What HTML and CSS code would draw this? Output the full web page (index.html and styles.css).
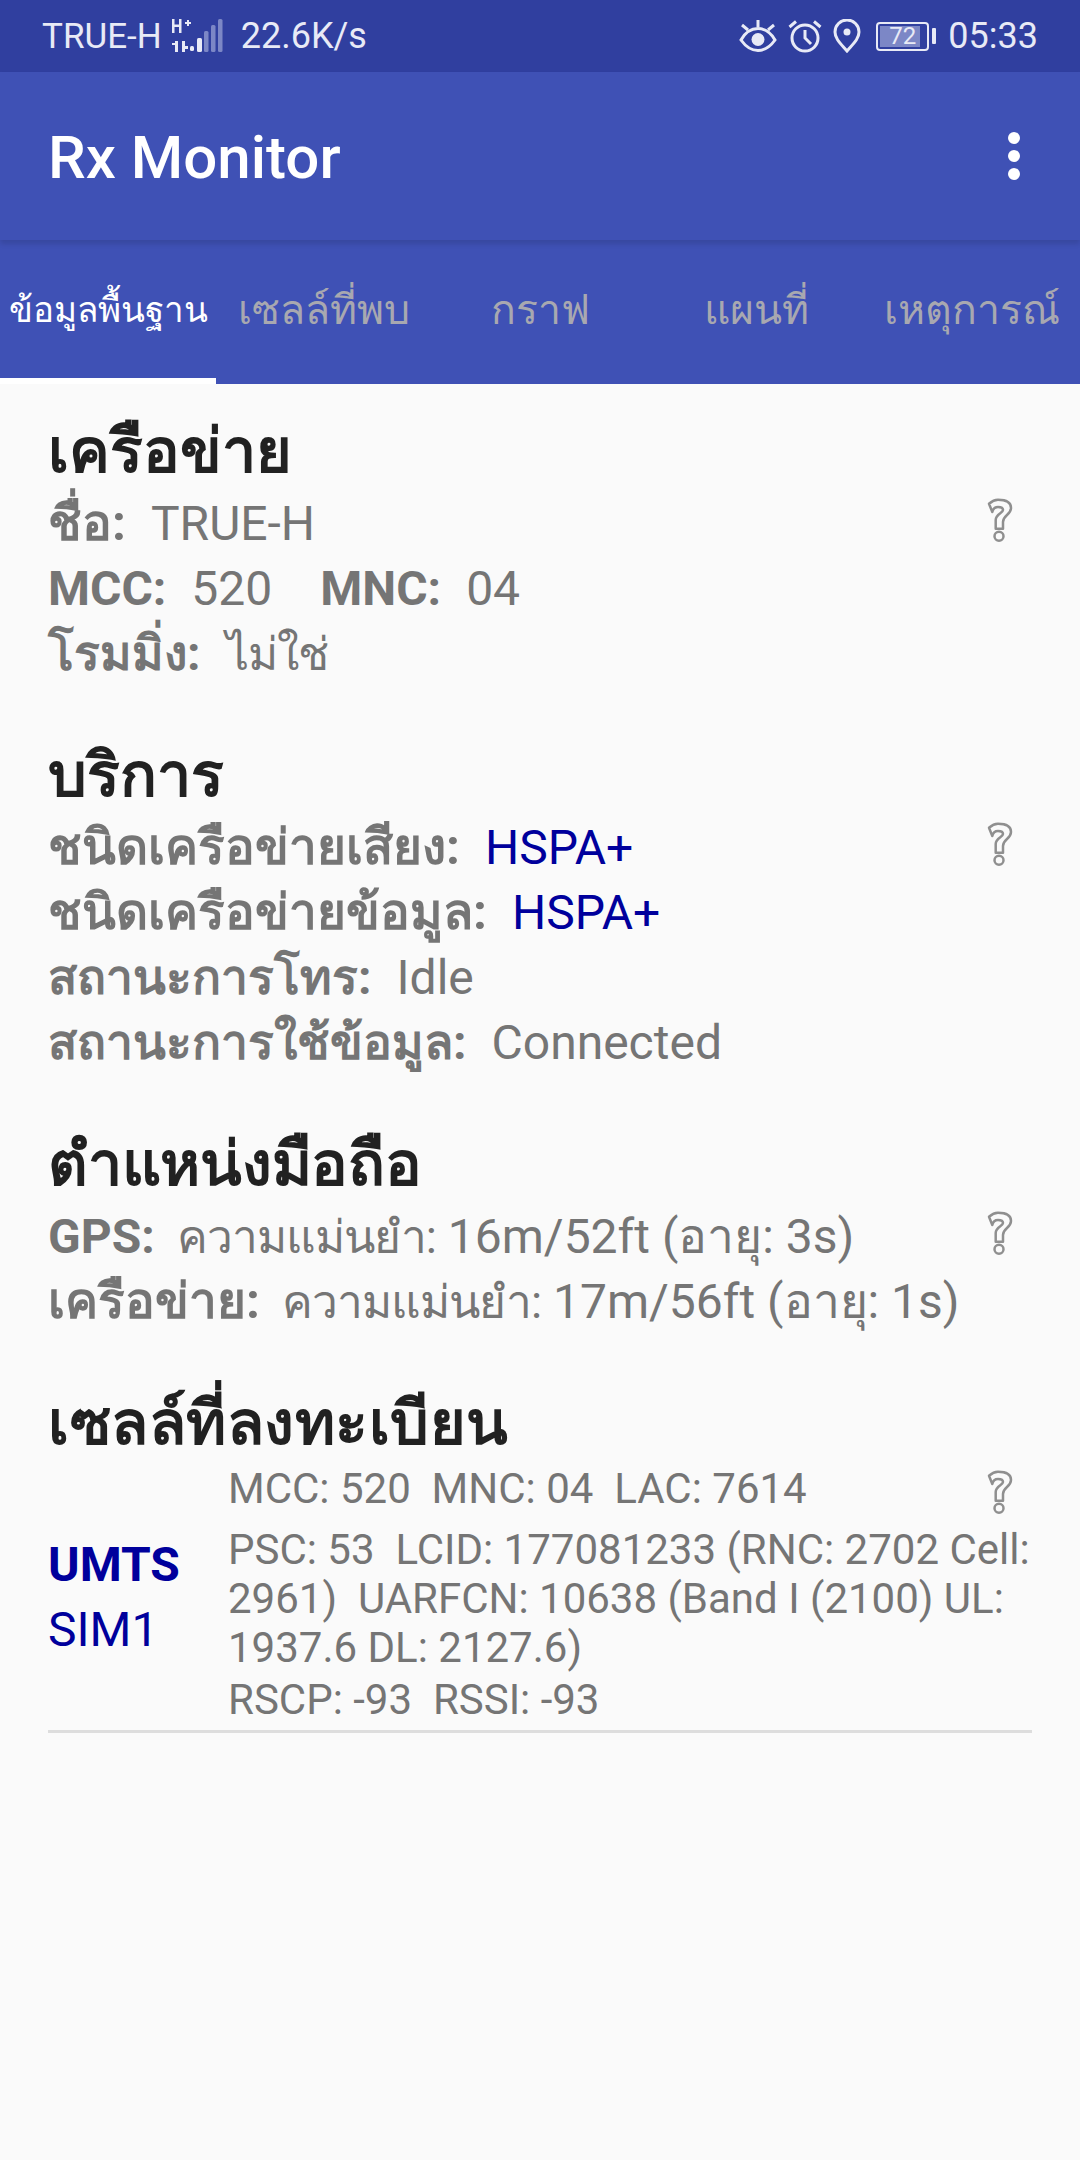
FILE: index.html
```html
<!DOCTYPE html>
<html lang="th">
<head>
<meta charset="utf-8">
<title>Rx Monitor</title>
<link rel="stylesheet" href="styles.css">
</head>
<body>
<div class="status">
  <div class="status-left">
    <span class="carrier">TRUE-H</span>
    <svg class="signal" width="56" height="36" viewBox="0 0 56 36">
      <g fill="#e8eaf6">
        <rect x="1" y="1" width="2.5" height="14"/><rect x="8" y="1" width="2.5" height="14"/><rect x="3" y="6.5" width="6" height="2.5"/>
        <rect x="14" y="4" width="6" height="2"/><rect x="16" y="2" width="2" height="6"/>
        <rect x="4" y="23" width="3" height="11"/><rect x="1" y="25" width="4" height="2"/>
        <rect x="11" y="23" width="3" height="11"/><rect x="11" y="28" width="6" height="3"/>
        <rect x="19" y="28" width="4" height="5" rx="1.5"/>
        <rect x="26" y="20" width="5" height="14" rx="1.5"/>
      </g>
      <g fill="#7c87c6">
        <rect x="33" y="13" width="4.5" height="21" rx="1.5"/>
        <rect x="40" y="7" width="4.5" height="27" rx="1.5"/>
        <rect x="47" y="1" width="4.5" height="33" rx="1.5"/>
      </g>
    </svg>
    <span class="speed">22.6K/s</span>
  </div>
  <div class="status-right">
    <svg class="st-icon" width="38" height="34" viewBox="0 0 38 34">
      <path d="M2 21C7 12 13 9.500 19 9.500S31 12 36 21C31 28 25 31.500 19 31.500S7 28 2 21Z" fill="none" stroke="#e8eaf6" stroke-width="3"/>
      <circle cx="19" cy="20.500" r="6.500" fill="#e8eaf6"/>
      <path d="M19 1V8M3 6L9 11M35 6L29 11" stroke="#e8eaf6" stroke-width="3" fill="none"/>
    </svg>
    <svg class="st-icon" width="34" height="34" viewBox="0 0 34 34">
      <circle cx="17" cy="19" r="13" fill="none" stroke="#e8eaf6" stroke-width="3"/>
      <path d="M17 11V19L23 25M1.500 8L8 2.500M32.500 8L26 2.500" fill="none" stroke="#e8eaf6" stroke-width="3"/>
    </svg>
    <svg class="st-icon pin" width="28" height="34" viewBox="0 0 28 34">
      <path d="M14 32C8 25 2 20 2 13A12 12 0 0 1 26 13C26 20 20 25 14 32Z" fill="none" stroke="#e8eaf6" stroke-width="3"/>
      <circle cx="14" cy="13" r="3.500" fill="#e8eaf6"/>
    </svg>
    <div class="battery">
      <div class="battery-box"><span class="battery-fill"></span><span class="battery-num">72</span></div>
      <span class="battery-tip"></span>
    </div>
    <span class="clock">05:33</span>
  </div>
</div>

<header class="appbar">
  <h1 class="app-title">Rx Monitor</h1>
  <div class="menu"><i></i><i></i><i></i></div>
</header>

<nav class="tabs">
  <div class="tab active small">ข้อมูลพื้นฐาน</div>
  <div class="tab">เซลล์ที่พบ</div>
  <div class="tab">กราฟ</div>
  <div class="tab">แผนที่</div>
  <div class="tab">เหตุการณ์</div>
</nav>

<main class="content">
  <section class="section">
    <h2 class="heading">เครือข่าย</h2>
    <div class="rows">
      <svg class="help" width="28" height="46" viewBox="0 0 28 46"><use href="#q"/></svg>
      <div class="row"><b class="tb">ชื่อ:</b><span>TRUE-H</span></div>
      <div class="row"><b>MCC:</b><span>520</span><b class="next">MNC:</b><span>04</span></div>
      <div class="row"><b class="tb2">โรมมิ่ง:</b><span class="th">ไม่ใช่</span></div>
    </div>
  </section>
  <section class="section">
    <h2 class="heading">บริการ</h2>
    <div class="rows">
      <svg class="help" width="28" height="46" viewBox="0 0 28 46"><use href="#q"/></svg>
      <div class="row"><b class="tb">ชนิดเครือข่ายเสียง:</b><span class="blue">HSPA+</span></div>
      <div class="row"><b class="tb">ชนิดเครือข่ายข้อมูล:</b><span class="blue">HSPA+</span></div>
      <div class="row"><b class="tb2">สถานะการโทร:</b><span>Idle</span></div>
      <div class="row"><b class="tb2">สถานะการใช้ข้อมูล:</b><span>Connected</span></div>
    </div>
  </section>
  <section class="section">
    <h2 class="heading tight">ตำแหน่งมือถือ</h2>
    <div class="rows">
      <svg class="help" width="28" height="46" viewBox="0 0 28 46"><use href="#q"/></svg>
      <div class="row"><b>GPS:</b><span class="th lead">ความแม่นยำ:</span> <span>16m/52ft (อายุ: 3s)</span></div>
      <div class="row"><b class="tb">เครือข่าย:</b><span class="th lead">ความแม่นยำ:</span> <span>17m/56ft (อายุ: 1s)</span></div>
    </div>
  </section>
  <section class="section">
    <h2 class="heading loose">เซลล์ที่ลงทะเบียน</h2>
    <div class="cell">
      <div class="cell-type"><b>UMTS</b><span>SIM1</span></div>
      <div class="cell-info">
        <svg class="help" width="28" height="46" viewBox="0 0 28 46"><use href="#q"/></svg>
        <p class="first">MCC: 520&nbsp; MNC: 04&nbsp; LAC: 7614</p>
        <p>PSC: 53&nbsp; LCID: 177081233 (RNC: 2702 Cell: 2961)&nbsp; UARFCN: 10638 (Band I (2100) UL: 1937.6 DL: 2127.6)</p>
        <p>RSCP: -93&nbsp; RSSI: -93</p>
      </div>
    </div>
    <div class="divider"></div>
  </section>
</main>

<svg class="defs" width="0" height="0">
  <defs>
    <g id="q" fill="#fafafa" stroke="#8f8f8f" stroke-width="2.500" stroke-linejoin="round">
      <path d="M3 5.700C6 3 9 1.700 12 1.700C18 1.700 25 3 25 10C25 17 17 17 17 24V30.700H9.700V22C9.700 16 17 15 17 12C17 10 15 9 12 9C9 9 7 11 6.300 14Z"/>
      <circle cx="13" cy="38.300" r="4.500"/>
    </g>
  </defs>
</svg>
</body>
</html>
```
FILE: styles.css
```css
* { box-sizing: border-box; }
html, body { margin: 0; padding: 0; }
body {
  width: 1080px;
  height: 2160px;
  background: #fafafa;
  font-family: Roboto, "Noto Sans", "Liberation Sans", sans-serif;
  overflow: hidden;
}
.status {
  height: 72px;
  background: #303f9f;
  color: #e8eaf6;
  display: flex;
  justify-content: space-between;
  align-items: center;
  padding: 0 42px 0 42px;
  font-size: 36px;
}
.status-left, .status-right { display: flex; align-items: center; }
.carrier { font-size: 35px; }
.signal { margin-left: 9px; }
.speed { margin-left: 14px; }
.st-icon { margin-right: 11px; }
.pin { margin-right: 15px; }
.battery { display: flex; align-items: center; margin-right: 12px; }
.battery-box {
  position: relative;
  width: 53px;
  height: 29px;
  border: 2px solid #e8eaf6;
  border-radius: 4px;
  font-size: 24px;
  text-align: center;
  line-height: 25px;
  overflow: hidden;
}
.battery-fill { position: absolute; left: 2px; top: 2px; bottom: 2px; width: 80%; background: #7c87c6; }
.battery-num { position: relative; }
.battery-tip { width: 4px; height: 16px; margin-left: 3px; background: #e8eaf6; border-radius: 1px; }
.appbar {
  height: 168px;
  background: #3f51b5;
  display: flex;
  align-items: center;
  justify-content: space-between;
  padding: 0 60px 0 48px;
  box-shadow: 0 4px 5px rgba(0,0,0,.12);
  position: relative;
}
.app-title { margin: 3px 0 0; font-size: 60px; font-weight: 500; color: #fff; }
.menu { display: flex; flex-direction: column; gap: 6px; }
.menu i { display: block; width: 12px; height: 12px; border-radius: 50%; background: #fff; }
.tabs { height: 144px; background: #3f51b5; display: flex; }
.tab {
  width: 216px;
  display: flex;
  align-items: center;
  justify-content: center;
  color: #a8a8b0;
  font-size: 41px;
  white-space: nowrap;
  padding-bottom: 6px;
}
.tab.active { color: #fff; border-bottom: 6px solid #fff; padding-bottom: 0; }
.tab.small { font-size: 35px; }
.content { padding: 0 48px; }
.section { margin-bottom: 50px; }
.section:first-child { padding-top: 28px; }
.heading { margin: 0; font-size: 61px; line-height: 79px; font-weight: 700; color: #212121; }
.heading.tight { letter-spacing: -.3px; }
.heading.loose { letter-spacing: .5px; }
.rows { position: relative; }
.row {
  height: 65px;
  line-height: 65px;
  font-size: 48px;
  color: #757575;
  white-space: nowrap;
}
.row b { font-weight: 700; margin-right: 25px; }
.row .tb { font-size: 49.5px; }
.row .tb2 { font-size: 48px; }
.row .th { font-size: 46px; letter-spacing: -1px; }
.row .lead { margin-left: -3px; }
.row .next { margin-left: 48px; }
.row .blue { color: #00009c; }
.help { position: absolute; right: 18px; top: 7px; }
.cell { display: flex; align-items: center; }
.cell-type { width: 180px; padding-top: 6px; display: flex; flex-direction: column; font-size: 48px; line-height: 65px; color: #00009c; }
.cell-type b { font-weight: 700; }
.cell-info { position: relative; flex: 1; padding-top: 1px; font-size: 42px; line-height: 49px; color: #757575; }
.cell-info p { margin: 0 0 3px; }
.cell-info .first { margin-bottom: 12px; }
.cell-info p:last-of-type { margin-bottom: 0; }
.divider { height: 3px; margin-top: 6px; background: #dddddd; }
.defs { position: absolute; }
```
